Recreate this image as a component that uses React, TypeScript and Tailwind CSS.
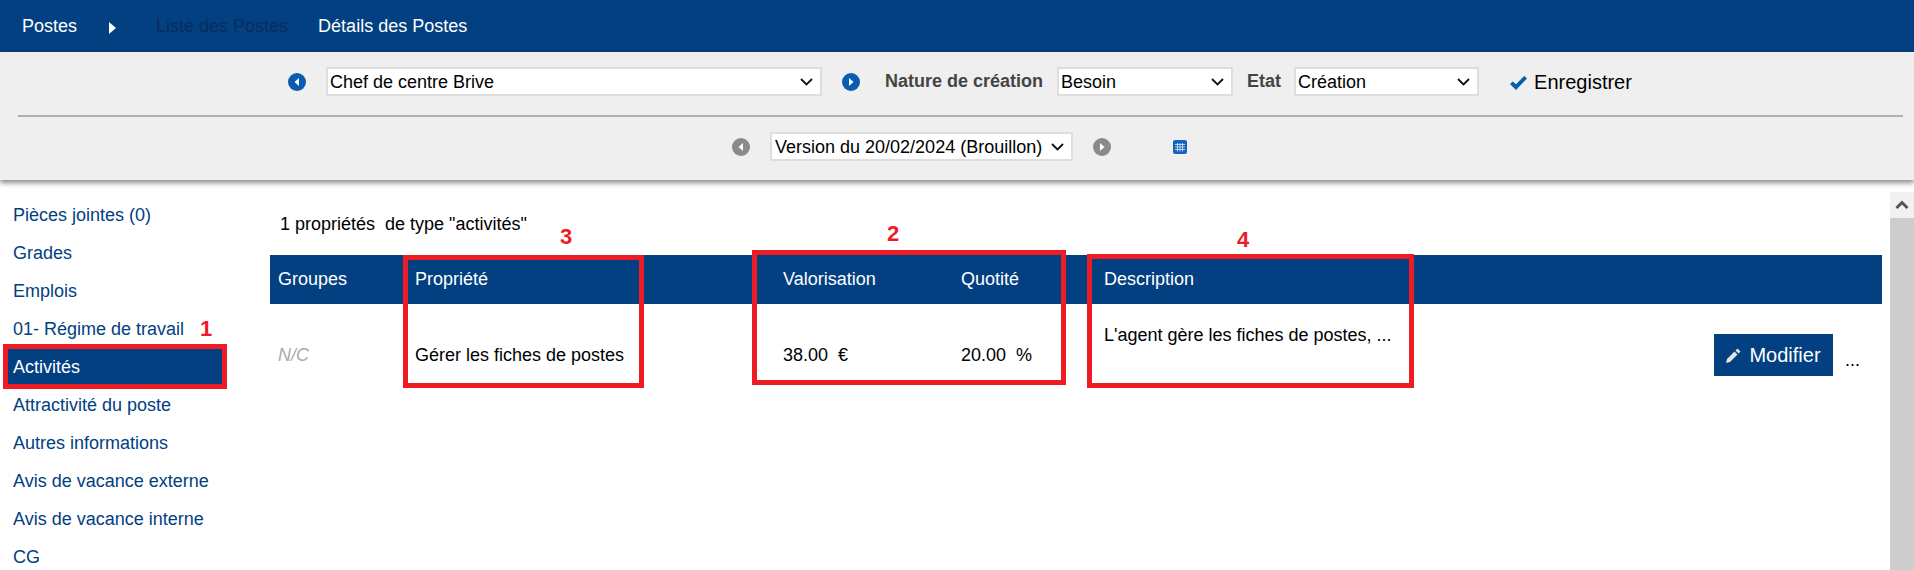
const sideLinks = [
  'Pièces jointes (0)',
  'Grades',
  'Emplois',
  '01- Régime de travail',
  'Activités',
  'Attractivité du poste',
  'Autres informations',
  'Avis de vacance externe',
  'Avis de vacance interne',
  'CG',
];

const RoundArrow = ({ dir, grey }: { dir: 'left' | 'right'; grey?: boolean }) => (
  <svg width="18" height="18" viewBox="0 0 18 18" className="shrink-0">
    <circle cx="9" cy="9" r="9" fill={grey ? '#8a8a8a' : '#0a5cb0'} />
    <path d={dir === 'left' ? 'M11 5v8L6.5 9z' : 'M7 5v8l4.5-4z'} fill="#fff" />
  </svg>
);

const CalendarIcon = () => (
  <svg width="14" height="14" viewBox="0 0 14 14" className="shrink-0">
    <rect width="14" height="14" rx="2" fill="#1463bd" />
    <path d="M2 4.5h10M2 7h10M2 9.5h10M4.5 3v8.5M7 3v8.5M9.5 3v8.5" stroke="#dbe8f8" strokeWidth="0.8" />
  </svg>
);

const Picker = ({ value, className, pad }: { value: string; className: string; pad: string }) => (
  <div className={`relative h-[29px] shrink-0 ${className}`}>
    <select className={`h-full w-full appearance-none border-2 border-[#dedede] bg-white ${pad}`}>
      <option>{value}</option>
    </select>
    <svg width="13" height="8" viewBox="0 0 13 8" className="pointer-events-none absolute top-[11px] right-[9px]">
      <path d="M1 1l5.5 5.5L12 1" fill="none" stroke="#111" strokeWidth="1.8" />
    </svg>
  </div>
);

const Marker = ({ className }: { className: string }) => (
  <div className={`absolute border-[5px] border-[#ed1c24] ${className}`}></div>
);

const Num = ({ className, children }: { className: string; children: string }) => (
  <span className={`absolute text-[22px] leading-none font-bold text-[#ed1c24] ${className}`}>{children}</span>
);

export default function App() {
  return (
    <div className="relative h-[570px] overflow-hidden bg-white font-['Liberation_Sans',Arial,sans-serif] text-[18px] text-black">
      <nav className="flex h-[52px] items-center bg-[#024082] pl-[22px] text-white">
        <span>Postes</span>
        <svg width="8" height="12" viewBox="0 0 8 12" className="mt-[3px] ml-[32px]">
          <path d="M0 0l7 6-7 6z" fill="#fff" />
        </svg>
        <span className="ml-[39px] text-[#0a2c5c]">Liste des Postes</span>
        <span className="ml-[30px]">Détails des Postes</span>
      </nav>

      <div className="relative z-10 h-[128px] bg-[#efefef] shadow-[0_3px_5px_rgba(0,0,0,0.45)]">
        <div className="flex h-[63px] items-center pb-[4px]">
          <div className="ml-[288px]">
            <RoundArrow dir="left" />
          </div>
          <Picker value="Chef de centre Brive" className="ml-[20px] w-[496px]" pad="pl-[2px]" />
          <div className="ml-[20px]">
            <RoundArrow dir="right" />
          </div>
          <label className="ml-[25px] font-bold text-[#444]">Nature de création</label>
          <Picker value="Besoin" className="ml-[14px] w-[176px]" pad="pl-[2px]" />
          <label className="ml-[14px] font-bold text-[#444]">Etat</label>
          <Picker value="Création" className="ml-[13px] w-[185px]" pad="pl-[2px]" />
          <svg width="17" height="14" viewBox="0 0 17 14" className="mt-[2px] ml-[31px]">
            <path d="M0 8l2.8-2.6L6 8.2 14.2 0 17 2.4 6 14z" fill="#0a5cb0" />
          </svg>
          <span className="ml-[7px] text-[20px]">Enregistrer</span>
        </div>
        <div className="mx-[18px] h-[2px] w-[1885px] bg-[#b0b0b0]"></div>
        <div className="flex h-[63px] items-center pb-[4px]">
          <div className="ml-[732px]">
            <RoundArrow dir="left" grey />
          </div>
          <Picker value="Version du 20/02/2024 (Brouillon)" className="ml-[20px] w-[303px]" pad="pl-[3px]" />
          <div className="ml-[20px]">
            <RoundArrow dir="right" grey />
          </div>
          <div className="ml-[62px]">
            <CalendarIcon />
          </div>
        </div>
      </div>

      <div className="flex">
        <aside className="w-[270px] shrink-0 pt-[16px] pl-[3px]">
          {sideLinks.map((link) => (
            <div
              key={link}
              className={`flex h-[38px] w-[224px] items-center pl-[10px] ${
                link === 'Activités' ? 'bg-[#024082] text-white' : 'text-[#024082]'
              }`}
            >
              {link}
            </div>
          ))}
        </aside>

        <main className="w-[1612px] shrink-0">
          <p className="mt-[33px] ml-[10px] h-[42px] leading-[22px] whitespace-pre">1 propriétés  de type "activités"</p>
          <div className="grid h-[49px] grid-cols-[137px_368px_178px_143px_1fr] items-center bg-[#024082] pl-[8px] text-white">
            <span>Groupes</span>
            <span>Propriété</span>
            <span>Valorisation</span>
            <span>Quotité</span>
            <span>Description</span>
          </div>
          <div className="grid h-[102px] grid-cols-[137px_368px_178px_143px_610px_1fr] items-center pl-[8px]">
            <span className="text-[#aaa] italic">N/C</span>
            <span>Gérer les fiches de postes</span>
            <span className="whitespace-pre">38.00  €</span>
            <span className="whitespace-pre">20.00  %</span>
            <span className="pb-[40px]">L'agent gère les fiches de postes, ...</span>
            <div className="flex items-end">
              <button className="flex h-[42px] w-[119px] items-center justify-center gap-[8px] bg-[#024082] text-[20px] text-white">
                <svg width="15" height="15" viewBox="0 0 15 15">
                  <path d="M0 15l1-4L8.5 3.5l3 3L4 14z" fill="#e4e4e4" />
                  <path d="M9.5 2.5L11.5.5l3 3-2 2z" fill="#e4e4e4" />
                </svg>
                Modifier
              </button>
              <span className="ml-[12px] pb-[2px]">...</span>
            </div>
          </div>
        </main>

        <div className="ml-[8px] w-[24px] shrink-0 pt-[12px]">
          <div className="flex h-[26px] items-center justify-center bg-[#f1f1f1]">
            <svg width="14" height="10" viewBox="0 0 14 10">
              <path d="M1.5 8L7 2.5 12.5 8" fill="none" stroke="#555" strokeWidth="3" />
            </svg>
          </div>
          <div className="h-[400px] bg-[#cdcdcd]"></div>
        </div>
      </div>

      <Marker className="top-[344px] left-[3px] h-[45px] w-[224px]" />
      <Marker className="top-[255px] left-[403px] h-[133px] w-[241px]" />
      <Marker className="top-[250px] left-[752px] h-[135px] w-[314px]" />
      <Marker className="top-[254px] left-[1087px] h-[134px] w-[327px]" />
      <Num className="top-[318px] left-[200px]">1</Num>
      <Num className="top-[226px] left-[560px]">3</Num>
      <Num className="top-[223px] left-[887px]">2</Num>
      <Num className="top-[229px] left-[1237px]">4</Num>
    </div>
  );
}
